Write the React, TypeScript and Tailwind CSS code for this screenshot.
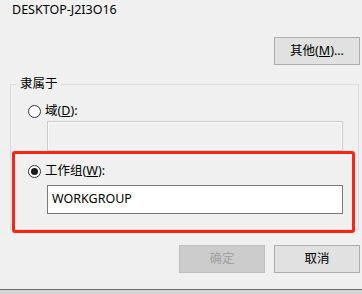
const font = {
  fontFamily: '"Noto Sans", "Noto Sans CJK SC", sans-serif',
};

const Radio = ({ checked }: { checked?: boolean }) => (
  <span className="flex h-[13px] w-[13px] items-center justify-center rounded-full border border-[#333333] bg-white">
    {checked && <span className="h-[7px] w-[7px] rounded-full bg-[#1a1a1a]" />}
  </span>
);

const Button = ({
  children,
  disabled,
}: {
  children: React.ReactNode;
  disabled?: boolean;
}) => (
  <div
    className={
      disabled
        ? "flex h-[28px] w-[86px] items-center justify-center border border-[#bfbfbf] bg-[#cccccc] text-[12.5px] text-[#a0a0a0]"
        : "flex h-[28px] w-[86px] items-center justify-center border border-[#adadad] bg-[#e1e1e1] text-[12.5px] text-black"
    }
  >
    {children}
  </div>
);

export default function App() {
  return (
    <div
      className="relative flex h-[294px] w-[362px] flex-col overflow-hidden bg-[#f0f0f0] text-black"
      style={font}
    >
      <div className="h-[20px] pl-[12px] pt-[2px] text-[12.5px] leading-[16px]">DESKTOP-J2I3O16</div>

      <div className="mt-[17px] flex justify-end pr-[2px]">
        <Button>
          其他(<span className="underline">M</span>)...
        </Button>
      </div>

      <fieldset className="mt-[11px] ml-[10px] h-[154px] w-[349px] border border-[#dcdcdc]">
        <legend className="ml-[6px] px-[3px] text-[12.5px] leading-[16px]">隶属于</legend>

        <div className="mt-[11px] flex h-[16px] items-center gap-[4px] pl-[17px] text-[12.5px] leading-[16px]">
          <Radio />
          <span>
            域(<span className="underline">D</span>):
          </span>
        </div>
        <div className="mt-[2px] ml-[36px] h-[30px] w-[296px] border border-[#cccccc] bg-[#f0f0f0] shadow-[inset_0_0_0_1px_#fafafa]" />

        <div className="mt-[12px] flex h-[16px] items-center gap-[4px] pl-[17px] text-[12.5px] leading-[16px]">
          <Radio checked />
          <span>
            工作组(<span className="underline">W</span>):
          </span>
        </div>
        <div className="mt-[6px] ml-[36px] flex h-[29px] w-[296px] items-center border border-[#7a7a7a] bg-white pl-[4px] text-[12.5px]">
          WORKGROUP
        </div>
      </fieldset>

      <div className="pointer-events-none absolute left-[12px] top-[151px] h-[82px] w-[343px] rounded-[3px] border-[3px] border-[#ff2516]" />

      <div className="mt-[15px] flex justify-end gap-[9px] pr-[2px]">
        <Button disabled>确定</Button>
        <Button>取消</Button>
      </div>

      <div className="mt-[16px] flex-1 border-t border-[#6d6d6d] bg-[#d4d4d4]" />
    </div>
  );
}
